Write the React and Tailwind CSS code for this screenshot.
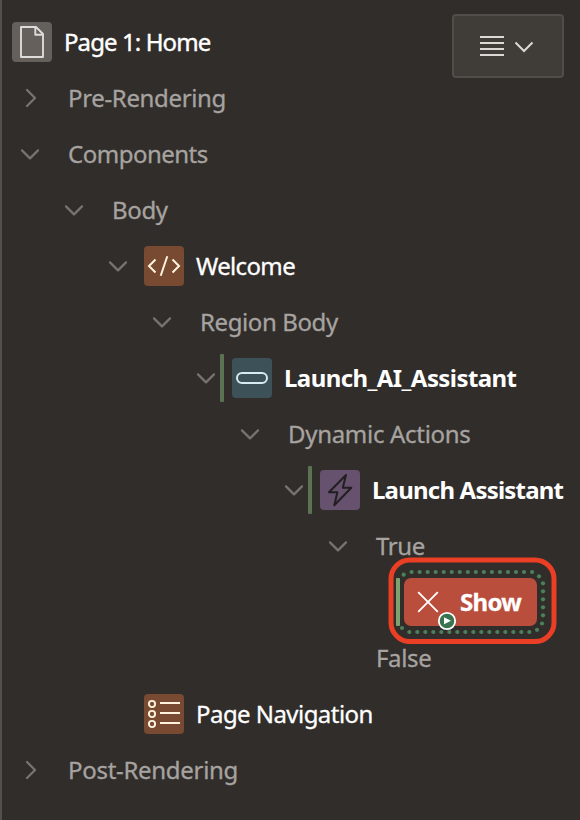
const CHEVRON = "#78736f";

function Chevron({ open }) {
  return (
    <svg width="20" height="20" viewBox="0 0 20 20" fill="none" stroke={CHEVRON} strokeWidth="2.3" strokeLinecap="round" strokeLinejoin="round">
      <path d={open ? "M2 6.4 10 14.4 18 6.4" : "M7 2 15 10 7 18"} />
    </svg>
  );
}

function PageIcon() {
  return (
    <svg width="40" height="40" viewBox="0 0 40 40" fill="none" stroke="#dedcda" strokeWidth="1.9" strokeLinejoin="round">
      <path d="M9 5H24L31 12V35H9ZM23.3 5V12.7H31" />
    </svg>
  );
}

function CodeIcon() {
  return (
    <svg width="40" height="40" viewBox="0 0 40 40" fill="none" stroke="#fff3dd" strokeWidth="2">
      <path d="M11.5 13.5 5 20 11.5 26.5M28.5 13.5 35 20 28.5 26.5M23.3 10.3 16.7 29.7" />
    </svg>
  );
}

function PillIcon() {
  return (
    <svg width="40" height="40" viewBox="0 0 40 40" fill="none" stroke="#d5edf0" strokeWidth="2">
      <rect x="5" y="15" width="30" height="10" rx="5" />
    </svg>
  );
}

function BoltIcon() {
  return (
    <svg width="40" height="40" viewBox="0 0 40 40" fill="none" stroke="#221e21" strokeWidth="2" strokeLinejoin="round">
      <path d="M26 5 9 22.3H17.4L14.3 35.2 31.3 17.7H22.8Z" />
    </svg>
  );
}

function ListIcon() {
  return (
    <svg width="40" height="40" viewBox="0 0 40 40" fill="none" stroke="#fff3dd" strokeWidth="1.9">
      <circle cx="8" cy="10" r="3.1" />
      <circle cx="8" cy="20" r="3.1" />
      <circle cx="8" cy="30" r="3.1" />
      <path d="M16 9H36M16 19H36M16 29H36" strokeWidth="2" />
    </svg>
  );
}

function Row({ indent = "", open, leaf, changed, icon, tile = "", label, text = "" }) {
  return (
    <li className={`flex h-14 items-center ${indent}`}>
      <span className="flex w-5 shrink-0 justify-center">{!leaf && <Chevron open={open} />}</span>
      {icon ? (
        <>
          <span className={`ml-1 h-12 w-1 shrink-0 rounded-[1px] ${changed ? "bg-[#5c7353]" : ""}`} />
          <span className={`ml-2 mr-3 size-10 shrink-0 rounded-[4px] ${tile}`}>{icon}</span>
        </>
      ) : (
        <span className="w-7 shrink-0" />
      )}
      <span className={`whitespace-nowrap ${text}`}>{label}</span>
    </li>
  );
}

const DOTS = [
  [403.7, 574.7],
  ...Array.from({ length: 16 }, (_, i) => [411.6 + i * 8.03, 572]),
  [539, 576.3],
  ...Array.from({ length: 5 }, (_, i) => [543, 583.3 + i * 8]),
  [542, 623.5],
  [537, 629.8],
  ...Array.from({ length: 16 }, (_, i) => [409.3 + i * 8, 632]),
  [402, 628],
];

function ShowAction() {
  return (
    <li className="relative flex h-14 items-center pl-[394px]">
      <span className="h-12 w-1 rounded-[1px] bg-[#7ea170]" />
      <span className="ml-1 flex h-12 w-[133px] items-center rounded-[7px] bg-[#b84e3b]">
        <svg className="ml-[13px]" width="22" height="22" viewBox="0 0 22 22" stroke="#fff" strokeWidth="1.8">
          <path d="M1.2 1.2 20.8 20.8M20.8 1.2 1.2 20.8" />
        </svg>
        <span className="ml-[21px] font-bold tracking-[-0.7px] text-white">Show</span>
      </span>
      <svg className="absolute left-[384px] top-[-20px]" width="174" height="96" viewBox="386 554 174 96">
        <rect x="391" y="560" width="163" height="81.5" rx="19" fill="none" stroke="#ea3f24" strokeWidth="5" />
        {DOTS.map(([x, y]) => (
          <circle key={`${x}-${y}`} cx={x} cy={y} r="2.1" fill="#4c805b" />
        ))}
        <circle cx="447" cy="621" r="8.2" fill="#397350" stroke="#fff" strokeWidth="1.8" />
        <path d="M444 617.3 451 620.8 444 624.3Z" fill="#fff" />
      </svg>
    </li>
  );
}

export default function App() {
  return (
    <div className="h-[820px] w-[580px] overflow-hidden border-l-2 border-[#54504d] bg-[#312d2a] pt-3.5 font-['Noto_Sans',sans-serif] text-[24px] leading-[32px] text-[#a6a3a0]">
      <header className="flex h-14 items-start justify-between pl-2.5 pr-4">
        <div className="flex h-14 items-center gap-3">
          <span className="size-10 rounded-[4px] bg-[#65605c]"><PageIcon /></span>
          <h1 className="whitespace-nowrap tracking-[-0.9px] text-white [-webkit-text-stroke:0.4px]">Page 1: Home</h1>
        </div>
        <button className="flex h-16 w-28 shrink-0 items-center rounded-[4px] border-2 border-[#514d49] bg-[#403c37] pl-[26px]">
          <svg width="54" height="24" viewBox="0 0 54 24" fill="none" stroke="#dbd9d6" strokeWidth="2">
            <path d="M0 3H24M0 9H24M0 15H24M0 21H24" />
            <path d="M35.5 8.5 44 17 52.5 8.5" />
          </svg>
        </button>
      </header>
      <ul className="[-webkit-text-stroke:0.3px]">
        <Row indent="pl-[18px]" label="Pre-Rendering" text="tracking-[-0.35px]" />
        <Row indent="pl-[18px]" open label="Components" text="tracking-[-0.5px]" />
        <Row indent="pl-[62px]" open label="Body" text="tracking-[-0.35px]" />
        <Row indent="pl-[106px]" open icon={<CodeIcon />} tile="bg-[#784a32]" label="Welcome" text="tracking-[-0.65px] text-white" />
        <Row indent="pl-[150px]" open label="Region Body" text="tracking-[-0.4px]" />
        <Row indent="pl-[194px]" open changed icon={<PillIcon />} tile="bg-[#3d5159]" label="Launch_AI_Assistant" text="font-bold tracking-[-0.58px] text-white [-webkit-text-stroke:0px]" />
        <Row indent="pl-[238px]" open label="Dynamic Actions" text="tracking-[-0.3px]" />
        <Row indent="pl-[282px]" open changed icon={<BoltIcon />} tile="bg-[#66526e]" label="Launch Assistant" text="font-bold tracking-[-0.8px] text-white [-webkit-text-stroke:0px]" />
        <Row indent="pl-[326px]" open label="True" text="tracking-[-0.35px]" />
        <ShowAction />
        <Row indent="pl-[326px]" leaf label="False" text="tracking-[-0.35px]" />
        <Row indent="pl-[106px]" leaf icon={<ListIcon />} tile="bg-[#784a32]" label="Page Navigation" text="tracking-[-0.55px] text-white" />
        <Row indent="pl-[18px]" label="Post-Rendering" text="tracking-[-0.3px]" />
      </ul>
    </div>
  );
}
